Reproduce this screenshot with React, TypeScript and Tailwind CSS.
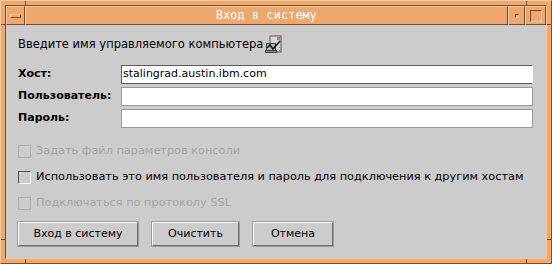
import React from "react";

const body = { fontFamily: '"DejaVu Sans", "Liberation Sans", sans-serif' };

function ComputerIcon() {
  return (
    <svg width="18" height="19" viewBox="0 0 18 19" className="ml-[2px]">
      <rect x="5" y="1" width="11" height="16" fill="#d8d8d8" stroke="#555" strokeWidth="1" />
      <rect x="12" y="2" width="3" height="3" fill="#e06868" />
      <rect x="1.5" y="8.5" width="9" height="7" fill="#b8b8b8" stroke="#444" strokeWidth="1" />
      <rect x="0.5" y="15.5" width="11" height="2" fill="#8a8a8a" stroke="#444" strokeWidth="1" />
      <path d="M2 13 L5 10 L8 14 L15 6" fill="none" stroke="#111" strokeWidth="1.6" />
      <path d="M14 12 L16 14 L14 16" fill="none" stroke="#60a060" strokeWidth="1" />
    </svg>
  );
}

function TextRow({ label, value, focused }: { label: string; value?: string; focused?: boolean }) {
  return (
    <div className="flex h-[19px] items-center">
      <div className="w-[103px] text-[11px] font-bold text-black" style={body}>
        {label}
      </div>
      <div
        className={`flex h-[19px] flex-1 items-center bg-white px-[1px] text-[11px] text-black ${
          focused
            ? "border border-t-[#5a5a5a] border-l-[#5a5a5a] border-r-[#ffffff] border-b-[#5a5a5a]"
            : "border border-[#9a9a9a]"
        }`}
        style={body}
      >
        {value}
      </div>
    </div>
  );
}

function Check({ label, disabled }: { label: string; disabled?: boolean }) {
  return (
    <div className="flex h-[26px] items-center gap-[5px]">
      <span
        className={`h-[13px] w-[13px] shrink-0 border ${
          disabled
            ? "border-[#b0b0b0] bg-[#cccccc]"
            : "border-t-[#505050] border-l-[#505050] border-r-[#ffffff] border-b-[#ffffff] bg-[#cccccc]"
        }`}
      />
      <span
        className={`whitespace-nowrap text-[11.3px] ${disabled ? "text-[#a4a4a4]" : "text-black"}`}
        style={body}
      >
        {label}
      </span>
    </div>
  );
}

function Btn({ label, w }: { label: string; w: string }) {
  return (
    <button
      type="button"
      className={`${w} flex h-[24px] items-center justify-center border border-t-[#ffffff] border-l-[#ffffff] border-r-[#6a6a6a] border-b-[#6a6a6a] bg-[#cccccc] text-[11px] text-black outline outline-1 outline-[#9c9c9c]`}
      style={body}
    >
      {label}
    </button>
  );
}

export default function App() {
  return (
    <div className="relative h-[264px] w-[552px] overflow-hidden border border-t-[#f8caa2] border-l-[#f8caa2] border-r-[#7a4e2c] border-b-[#7a4e2c] bg-[#eca86e] p-[4px]">
      {/* corner ticks */}
      <span className="absolute left-[24px] top-0 h-[4px] w-[1px] bg-[#7a4e2c]" />
      <span className="absolute right-[24px] top-0 h-[4px] w-[1px] bg-[#7a4e2c]" />
      <span className="absolute bottom-0 left-[24px] h-[4px] w-[1px] bg-[#7a4e2c]" />
      <span className="absolute bottom-0 right-[24px] h-[4px] w-[1px] bg-[#7a4e2c]" />
      <span className="absolute left-0 top-[23px] h-[1px] w-[4px] bg-[#7a4e2c]" />
      <span className="absolute right-0 top-[23px] h-[1px] w-[4px] bg-[#7a4e2c]" />
      <span className="absolute bottom-[23px] left-0 h-[1px] w-[4px] bg-[#7a4e2c]" />
      <span className="absolute bottom-[23px] right-0 h-[1px] w-[4px] bg-[#7a4e2c]" />

      <div className="flex h-full flex-col border border-t-[#7a4e2c] border-l-[#7a4e2c] border-r-[#f8caa2] border-b-[#f8caa2]">
        {/* title bar */}
        <div className="flex h-[19px] shrink-0">
          <div className="flex w-[19px] items-center justify-center border border-t-[#f8caa2] border-l-[#f8caa2] border-r-[#7a4e2c] border-b-[#7a4e2c]">
            <span className="h-[4px] w-[11px] border border-t-[#f8caa2] border-l-[#f8caa2] border-r-[#7a4e2c] border-b-[#7a4e2c]" />
          </div>
          <div
            className="flex flex-1 items-center justify-center border border-t-[#f8caa2] border-l-[#f8caa2] border-r-[#7a4e2c] border-b-[#7a4e2c] text-[11.5px] tracking-[0.3px] text-white"
            style={{ fontFamily: '"DejaVu Sans Mono", "Liberation Mono", monospace' }}
          >
            Вход в систему
          </div>
          <div className="flex w-[17px] items-center justify-center border border-t-[#f8caa2] border-l-[#f8caa2] border-r-[#7a4e2c] border-b-[#7a4e2c]">
            <span className="h-[4px] w-[4px] border border-t-[#7a4e2c] border-l-[#7a4e2c] border-r-[#f8caa2] border-b-[#f8caa2]" />
          </div>
          <div className="flex w-[21px] items-center justify-center border border-t-[#f8caa2] border-l-[#f8caa2] border-r-[#7a4e2c] border-b-[#7a4e2c]">
            <span className="h-[12px] w-[12px] border border-t-[#7a4e2c] border-l-[#7a4e2c] border-r-[#f8caa2] border-b-[#f8caa2]" />
          </div>
        </div>

        {/* client area */}
        <div className="flex flex-1 flex-col bg-[#cccccc] pl-[12px] pr-[13px]">
          <div className="mt-[10px] flex h-[19px] items-center">
            <span className="text-[11.5px] text-black" style={body}>
              Введите имя управляемого компьютера
            </span>
            <ComputerIcon />
          </div>

          <div className="mt-[11px] flex flex-col gap-[3px]">
            <TextRow label="Хост:" value="stalingrad.austin.ibm.com" focused />
            <TextRow label="Пользователь:" />
            <TextRow label="Пароль:" />
          </div>

          <div className="mt-[10px] flex flex-col">
            <Check label="Задать файл параметров консоли" disabled />
            <Check label="Использовать это имя пользователя и пароль для подключения к другим хостам" />
            <Check label="Подключаться по протоколу SSL" disabled />
          </div>

          <div className="mt-[6px] flex gap-[14px]">
            <Btn label="Вход в систему" w="w-[120px]" />
            <Btn label="Очистить" w="w-[87px]" />
            <Btn label="Отмена" w="w-[80px]" />
          </div>
        </div>
      </div>
    </div>
  );
}
